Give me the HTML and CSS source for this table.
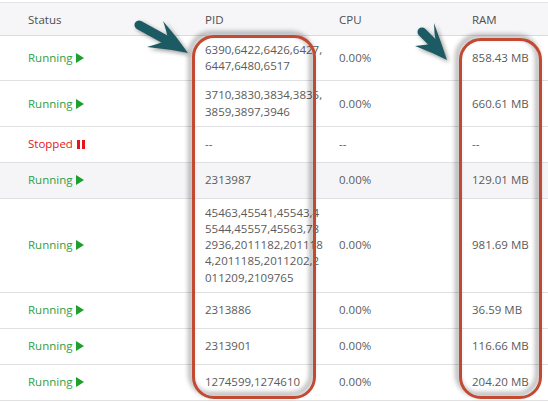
FILE: index.html
```html
<!DOCTYPE html>
<html>
<head>
<meta charset="utf-8">
<link rel="stylesheet" href="styles.css">
</head>
<body>
<div class="page">
  <table class="proc">
    <colgroup>
      <col class="c-status"><col class="c-pid"><col class="c-cpu"><col class="c-ram">
    </colgroup>
    <thead>
      <tr><th>Status</th><th>PID</th><th>CPU</th><th>RAM</th></tr>
    </thead>
    <tbody>
      <tr><td><span class="run">Running</span> <i class="play"></i></td><td class="pid">6390,6422,6426,6427,6447,6480,6517</td><td>0.00%</td><td>858.43 MB</td></tr>
      <tr><td><span class="run">Running</span> <i class="play"></i></td><td class="pid">3710,3830,3834,3835,3859,3897,3946</td><td>0.00%</td><td>660.61 MB</td></tr>
      <tr><td><span class="stop">Stopped</span> <i class="pause"></i></td><td class="pid">--</td><td>--</td><td>--</td></tr>
      <tr class="hl"><td><span class="run">Running</span> <i class="play"></i></td><td class="pid">2313987</td><td>0.00%</td><td>129.01 MB</td></tr>
      <tr><td><span class="run">Running</span> <i class="play"></i></td><td class="pid">45463,45541,45543,45544,45557,45563,782936,2011182,2011184,2011185,2011202,2011209,2109765</td><td>0.00%</td><td>981.69 MB</td></tr>
      <tr><td><span class="run">Running</span> <i class="play"></i></td><td class="pid">2313886</td><td>0.00%</td><td>36.59 MB</td></tr>
      <tr><td><span class="run">Running</span> <i class="play"></i></td><td class="pid">2313901</td><td>0.00%</td><td>116.66 MB</td></tr>
      <tr><td><span class="run">Running</span> <i class="play"></i></td><td class="pid">1274599,1274610</td><td>0.00%</td><td>204.20 MB</td></tr>
    </tbody>
  </table>

  <div class="hbox hbox-pid"></div>
  <div class="hbox hbox-ram"></div>

  <svg class="arrows" width="548" height="402" viewBox="0 0 548 402">
    <g class="arrow">
      <line x1="139" y1="25" x2="168" y2="41" stroke-width="9" stroke-linecap="round"/>
      <path d="M188 53 Q176 36 163 21 Q167 32 168 40 Q158 44 147 47 Q168 49 188 53 Z"/>
    </g>
    <g class="arrow">
      <line x1="422" y1="32" x2="434" y2="44" stroke-width="9" stroke-linecap="round"/>
      <path d="M447 60 Q441 42 434 23 Q434 33 436 43 Q426 45 415 46 Q431 52 447 60 Z"/>
    </g>
  </svg>
</div>
</body>
</html>
```

FILE: styles.css
```css
html, body {
  margin: 0;
  padding: 0;
  background: #ffffff;
}

body {
  font-family: "Open Sans", "Noto Sans", "DejaVu Sans", sans-serif;
  font-size: 11.5px;
  color: #5b5b5b;
}

.page {
  position: relative;
  width: 548px;
  height: 402px;
  padding-top: 2px;
  box-sizing: border-box;
  overflow: hidden;
}

.proc {
  width: 548px;
  border-collapse: separate;
  border-spacing: 0;
  table-layout: fixed;
}

.c-status { width: 191px; }
.c-pid { width: 134px; }
.c-cpu { width: 133px; }
.c-ram { width: 90px; }

.proc th {
  height: 34px;
  box-sizing: border-box;
  padding: 0 14px;
  background: #f6f6f8;
  border-top: 1px solid #e3e3e6;
  border-bottom: 1px solid #dcdcdf;
  text-align: left;
  font-weight: normal;
  color: #4f4f4f;
}

.proc td {
  height: 36px;
  box-sizing: border-box;
  padding: 6px 4px 6px 14px;
  line-height: 16.2px;
  border-bottom: 1px solid #e0e0e2;
  vertical-align: middle;
}

.proc th:first-child,
.proc td:first-child {
  padding-left: 28px;
}

.proc td.pid {
  padding-right: 1px;
  word-break: break-all;
}

.proc tr.hl td {
  background: #f5f5f8;
}

.run { color: #2f9e3f; }
.stop { color: #e5141c; }

.play {
  display: inline-block;
  width: 0;
  height: 0;
  border-left: 8px solid #1f9f2d;
  border-top: 5px solid transparent;
  border-bottom: 5px solid transparent;
  vertical-align: -1px;
  margin-left: 1px;
}

.pause {
  display: inline-block;
  width: 2px;
  height: 9px;
  border-left: 3px solid #e5141c;
  border-right: 3px solid #e5141c;
  vertical-align: -1px;
  margin-left: 1px;
}

.hbox {
  position: absolute;
  box-sizing: border-box;
  border: 3.5px solid #c24a33;
  border-radius: 22px;
  filter: drop-shadow(-3px -3px 2.5px rgba(0, 0, 0, 0.45));
}

.hbox-pid {
  left: 192px;
  top: 35px;
  width: 124px;
  height: 364px;
}

.hbox-ram {
  left: 459px;
  top: 38px;
  width: 83px;
  height: 361px;
}

.arrows {
  position: absolute;
  left: 0;
  top: 0;
  pointer-events: none;
}

.arrow {
  fill: #1c5b63;
  stroke: #1c5b63;
  filter: drop-shadow(2px 2px 2px rgba(0, 0, 0, 0.4));
}

.arrow path {
  stroke: none;
}
```
